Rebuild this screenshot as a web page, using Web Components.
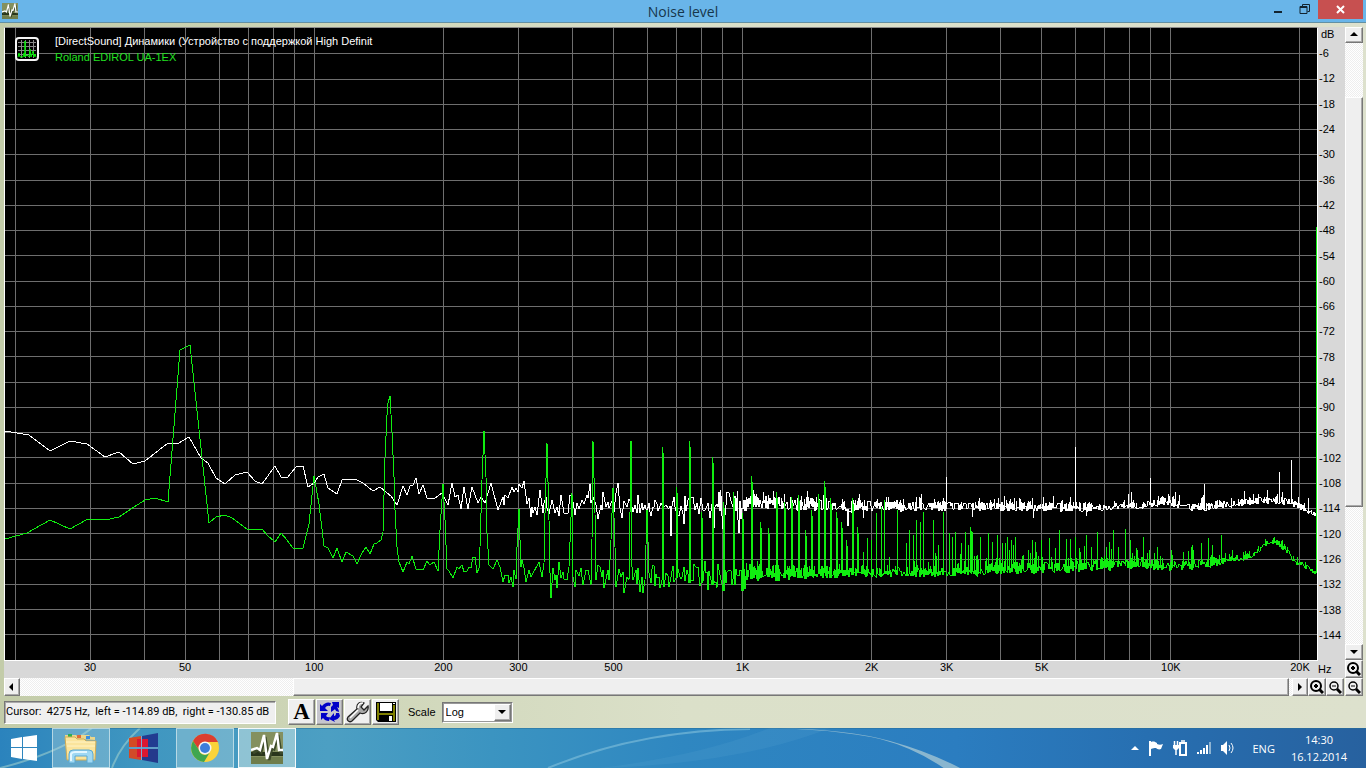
<!DOCTYPE html>
<html lang="en">
<head>
<meta charset="utf-8">
<title>Noise level</title>
<style>
  body {
    margin: 0;
    min-height: 100vh;
    display: flex;
    flex-direction: column;
    font: 11px/13px "Liberation Sans", Arial, sans-serif;
    color: #000;
    overflow: hidden;
  }

  analyzer-window {
    flex: 1;
  }
</style>
</head>
<body>
<analyzer-window></analyzer-window>
<task-bar></task-bar>

<script>
const minFreq = 18.97;
const decadeWidth = 428;
const plotLeft = 5;
const plotTop = 28;
const plotWidth = 1312;
const plotHeight = 632;
const freqTicks = [30, 50, 100, 200, 300, 500, 1000, 2000, 3000, 5000, 10000, 20000];

const freqToOffset = (freq) => decadeWidth * Math.log10(freq / minFreq);
const dbToY = (db) => 53.6 + (-db - 6) * 4.21;

const raisedStyle = `
  border: 1px solid;
  border-color: #fff #777 #777 #fff;
  box-shadow: inset -1px -1px #aaa;
  background: #efefef;
`;

const pulseIcon = `
  <svg viewBox="0 0 32 32" preserveAspectRatio="none">
    <rect width="32" height="32" fill="#84905f"/>
    <path d="M0 20H32V24H0Z" fill="#29351b"/>
    <path d="M0 25H32V32H0Z" fill="#6f7d4b"/>
    <path d="M1 20 6 17 9 19 13 4 17 27 20 15 22 16 26 2 29 20 32 20" fill="none"
      stroke="#3d4a2a" stroke-width="3" transform="translate(1 1)"/>
    <path d="M0 18 6 16 9 18 13 3 16 27 20 14 22 15 26 1 28 18 32 18" fill="none"
      stroke="#fff" stroke-width="2.4"/>
  </svg>`;

// low end of the spectrum, one point per FFT bin
const whiteHead = `5,431 29,435 50,451 70,441 87,444 105,457 119,452 133,464 145,461 168,443
  179,443 189,437 201,458 208,463 216,478 225,484 235,475 247,472 255,481 262,484 275,466
  281,477 287,478 296,467 303,466 308,487 314,483 318,477 324,474 328,488 337,494 342,480
  355,479 363,483 373,491 380,487 387,493 391,496 397,505 403,486 407,495 410,486 413,485
  416,478 419,494 423,485 427,498 435,498 442,493 448,505 452,483 455,497 458,495 461,509
  464,487 468,509 472,487 478,503 481,497 485,503 491,483 498,510 503,497 504,505 505,495
  508,498 512,487 514,492 516,488 518,492 519,484 522,488 524,481 527,504 529,498 531,517
  532,507 533,513 535,507 537,515 540,490 543,513 544,503 546,497 547,508 549,514 552,500
  555,513 557,507 559,516 561,495 564,513 568,513 570,495 572,495 575,515 577,503 579,509
  582,500 584,504 587,495 588,498 590,484 591,503 593,497 596,505 598,519 601,505 602,510
  603,492 606,507 608,502 609,508 612,501 614,512 616,493 618,483 620,508 622,518 624,501
  627,507 629,499 631,502 633,512 635,505 637,513 638,495 640,513 642,503 643,510 645,505
  647,512 649,503`;

const greenHead = `5,539 27,533 50,520 70,529 88,519 105,520 119,517 131,509 145,500 155,498
  168,502 180,350 190,345 209,523 216,517 225,515 232,518 247,529 262,529 267,535 275,542
  281,533 287,540 293,548 303,548 309,524 314,476 319,504 324,546 328,548 333,558 337,548
  342,562 346,552 353,556 357,564 362,553 366,547 370,554 374,544 377,543 381,540 383,532
  385,458 387,415 388,403 390,396 392,432 394,477 395,510 397,547 399,562 403,572 407,562
  409,564 412,556 416,569 423,570 427,561 430,565 434,562 438,571 440,530 443,484 445,520
  447,569 449,571 453,578 457,567 459,569 462,565 464,572 467,571 469,567 471,568 473,557
  475,557 477,573 479,568 480,547 482,480 484,431 486,477 487,533 489,565 493,569 497,560
  500,567 503,582 505,575 508,575 509,583 511,577 513,587 514,570 516,579 517,547 519,509
  520,540 521,567 522,560 524,568 526,582 529,570 531,577 539,562 542,577 544,563 545,513
  547,443 549,520 550,573 551,598 553,568 555,580 556,575 557,588 559,562 561,578 563,572
  564,579 567,580 569,567 572,493 573,577 575,587 576,570 579,576 581,568 583,585 586,570
  588,570 591,585 592,540 593,441 595,513 596,580 598,565 600,567 602,577 603,570 604,588
  608,570 609,580 611,540 613,488 615,547 616,587 619,569 621,577 623,572 624,593 627,577
  629,580 630,513 631,441 632,567 633,580 636,570 637,584 638,568 640,592 642,577 643,593
  645,580 647,510 649,573`;

// base: [x, centre, half height, tail] of the noise band; spikes: [x, y]
const whiteBand = {
  seed: 7,
  denseFrom: 735,
  base: [[650, 505, 16, 4], [740, 506, 17, 4], [750, 502, 7, 6], [800, 504, 7, 6], [870, 506, 6, 8],
    [940, 506, 5, 8], [1000, 506, 5, 8], [1080, 507, 5, 9], [1140, 505, 4, 7], [1165, 501, 4, 5],
    [1190, 507, 5, 10], [1240, 503, 4, 10], [1270, 499, 4, 8], [1290, 502, 4, 6],
    [1305, 508, 4, 5], [1316, 514, 3, 0]],
  spikes: [[670, 530], [683, 518], [713, 522], [720, 490], [722, 523], [737, 491], [738, 527],
    [773, 491], [807, 491], [847, 520], [863, 518], [946, 477], [972, 517], [1033, 518], [1075, 447],
    [1086, 516], [1128, 494], [1131, 492], [1150, 478], [1175, 492], [1204, 484], [1253, 494],
    [1267, 490], [1279, 472], [1291, 460], [1308, 498]],
};

const greenBand = {
  seed: 23,
  denseFrom: 745,
  base: [[650, 575, 17, 6], [700, 577, 18, 6], [740, 577, 17, 6], [760, 573, 9, 6],
    [850, 572, 6, 6], [930, 572, 5, 8], [965, 571, 5, 24], [1000, 568, 7, 24], [1060, 567, 6, 22],
    [1100, 565, 6, 20], [1140, 562, 6, 16], [1165, 566, 6, 12], [1190, 564, 6, 18],
    [1220, 561, 5, 12], [1240, 557, 3, 8], [1252, 556, 3, 7], [1264, 544, 4, 3], [1273, 541, 3, 3],
    [1281, 544, 4, 3], [1292, 557, 4, 4], [1300, 564, 3, 4], [1310, 569, 3, 4], [1316, 573, 2, 0]],
  spikes: [[662, 447], [676, 487], [689, 441], [701, 512], [712, 457], [723, 502], [733, 492],
    [742, 513], [751, 476], [760, 522], [768, 528], [776, 492], [784, 502], [791, 497], [798, 495],
    [805, 530], [811, 510], [818, 494], [824, 481], [830, 498], [836, 512], [841, 522], [846, 540],
    [852, 498], [857, 527], [863, 552], [867, 538], [871, 540], [876, 513], [881, 507], [884, 500],
    [889, 557], [897, 510], [906, 543], [909, 530], [913, 535], [916, 520], [920, 522], [923, 512],
    [933, 520], [935, 553], [936, 556], [938, 545], [943, 512], [949, 533], [952, 537], [955, 532],
    [961, 543], [965, 532], [968, 545], [970, 527], [971, 531], [972, 532], [974, 556], [976, 556],
    [977, 555], [980, 537], [988, 533], [992, 542], [997, 535], [1007, 537], [1009, 550],
    [1011, 540], [1015, 537], [1023, 555], [1032, 540], [1036, 552], [1041, 540], [1049, 538],
    [1055, 548], [1059, 530], [1066, 539], [1070, 539], [1075, 537], [1079, 548], [1084, 546],
    [1086, 535], [1091, 547], [1097, 532], [1106, 547], [1109, 542], [1113, 530], [1118, 547],
    [1125, 529], [1130, 540], [1136, 548], [1143, 537], [1157, 547], [1171, 550], [1183, 552],
    [1193, 550], [1201, 543], [1208, 538], [1212, 545], [1221, 535], [1232, 550]],
};

function noiseBand({ seed, denseFrom, base, spikes }) {
  const spikeAt = new Map(spikes);
  const points = [];
  let state = seed * 7919;
  const random = () => {
    state = (state * 16807) % 2147483647;
    return state / 2147483647;
  };
  let i = 0;
  let clump = false;
  for (let x = base[0][0]; x <= base[base.length - 1][0]; x++) {
    while (i < base.length - 2 && base[i + 1][0] <= x) i++;
    const t = (x - base[i][0]) / (base[i + 1][0] - base[i][0]);
    const [centre, half, tail] = [1, 2, 3].map((n) => base[i][n] + (base[i + 1][n] - base[i][n]) * t);
    const low = Math.round(centre + half * random());
    const high = Math.round(centre - half * random() - tail * Math.pow(random(), 4));
    if (random() < (clump ? 0.22 : 0.32)) clump = !clump;
    if (spikeAt.has(x)) {
      // the bins get narrower than a pixel to the right, and so do the spikes
      const next = x < 860 && !spikeAt.has(x + 1) ? x + 1 : x;
      points.push([x, low], [x, spikeAt.get(x)]);
      if (next > x) {
        points.push([next, spikeAt.get(x) + 6]);
      }
      points.push([next, low]);
      x = next;
    } else if (x < denseFrom) {
      points.push([x, Math.round(centre + half * (random() + random() - 1))]);
      if (random() < 0.5 && !spikeAt.has(x + 1)) x++;
    } else if (clump) {
      points.push([x, low], [x, high]);
    } else {
      points.push([x, Math.round(centre + 1.8 * half * (random() - 0.5))]);
      if (random() < 0.2 && !spikeAt.has(x + 1)) x++;
    }
  }
  return points.map((p) => p.join(",")).join(" ");
}

function gridPath() {
  let d = "";
  for (let decade = 10; decade <= 10000; decade *= 10) {
    for (let n = 1; n < 10; n++) {
      const x = Math.round(plotLeft + freqToOffset(n * decade)) + 0.5;
      if (x > plotLeft && x < plotLeft + plotWidth) {
        d += `M${x} ${plotTop}V${plotTop + plotHeight}`;
      }
    }
  }
  for (let db = -6; db >= -144; db -= 6) {
    d += `M${plotLeft} ${Math.floor(dbToY(db) + 0.2) + 0.5}H${plotLeft + plotWidth}`;
  }
  return d;
}

class TitleBar extends HTMLElement {
  constructor() {
    super();
    this.attachShadow({ mode: "open" }).innerHTML = `
      <style>
        :host {
          display: grid;
          grid-template-columns: 1fr auto 1fr;
          height: 22px;
          background: #69b5e9;
          border-bottom: 1px solid #6390a3;
        }
        .icon {
          width: 16px;
          height: 16px;
          margin: 3px 0 0 2px;
        }
        .icon svg {
          display: block;
          width: 100%;
          height: 100%;
        }
        h1 {
          margin: 0;
          font: 14px/23px "Open Sans", sans-serif;
          color: #17364b;
        }
        .buttons {
          display: flex;
          justify-content: flex-end;
          padding-right: 3px;
        }
        button {
          width: 26px;
          height: 19px;
          padding: 0;
          border: 0;
          background: none;
        }
        .close {
          width: 45px;
          background: #c75050;
        }
        button svg {
          display: block;
          margin: 0 auto;
        }
      </style>
      <div class="icon">${pulseIcon}</div>
      <h1><slot></slot></h1>
      <div class="buttons">
        <button aria-label="Minimize"><svg width="12" height="19"><path d="M1 11H9V13H1Z" fill="#122430"/></svg></button>
        <button aria-label="Restore"><svg width="12" height="19" fill="none" stroke="#122430"><path d="M3.500 6.500V4.500H10.500V11.500H8.500"/><path d="M1 6.500H8V13.500H1Z"/><path d="M1 7.500H8"/></svg></button>
        <button class="close" aria-label="Close"><svg width="10" height="19"><path d="M1 6 8 13M8 6 1 13" stroke="#fff" stroke-width="2"/></svg></button>
      </div>`;
  }
}

class SpectrumChart extends HTMLElement {
  constructor() {
    super();
    this.attachShadow({ mode: "open" }).innerHTML = `
      <style>
        :host {
          display: block;
          position: relative;
          min-height: 0;
          background: #000;
          border: 1px solid #fff;
          border-top-color: #8c8c8c;
        }
        .plot {
          display: block;
          width: 100%;
          height: 100%;
        }
        .plot * {
          fill: none;
          vector-effect: non-scaling-stroke;
          shape-rendering: crispEdges;
        }
        .legend {
          position: absolute;
          top: 5px;
          left: 10px;
          display: flex;
          align-items: center;
          gap: 16px;
          font-size: 11px;
          line-height: 16px;
          color: #fff;
        }
        .right {
          color: #22e022;
        }
        p {
          margin: 0;
        }
      </style>
      <svg class="plot" viewBox="${plotLeft} ${plotTop} ${plotWidth} ${plotHeight}" preserveAspectRatio="none">
        <path d="${gridPath()}" stroke="#6e6e6e"/>
        <polyline points="${whiteHead} ${noiseBand(whiteBand)}" stroke="#fff"/>
        <polyline points="${greenHead} ${noiseBand(greenBand)} 1316,573 1316,227" stroke="#10ee10"/>
      </svg>
      <div class="legend">
        <svg width="24" height="24" fill="none">
          <rect x="1" y="1" width="22" height="22" rx="3" fill="#000" stroke="#f4f4f4" stroke-width="2"/>
          <path d="M6.500 3V21M10.500 3V21M14.500 3V21M18.500 3V21M3 5.500H21M3 9.500H21M3 13.500H21M3 17.500H21" stroke="#888"/>
          <path d="M3 20 4 16 5 20H8L9 16 10 20V4 20L12 18 14 20 15 12 16 20 18 14 19 20 20 17 21 20" stroke="#0e0"/>
        </svg>
        <div>
          <p>[DirectSound] Динамики (Устройство с поддержкой High Definit</p>
          <p class="right">Roland EDIROL UA-1EX</p>
        </div>
      </div>`;
  }
}

class LevelAxis extends HTMLElement {
  constructor() {
    super();
    let labels = "";
    for (let db = -6; db >= -144; db -= 6) {
      labels += `<span>${db}</span>`;
    }
    this.attachShadow({ mode: "open" }).innerHTML = `
      <style>
        :host {
          display: flex;
          flex-direction: column;
          padding: 1px 0 13px 1px;
          background: #d8d8d8;
          white-space: nowrap;
          min-height: 0;
        }
        .unit {
          flex: none;
          height: 13px;
          padding-left: 2px;
        }
        span {
          flex: 1;
          display: flex;
          align-items: center;
        }
      </style>
      <div class="unit">dB</div>${labels}`;
  }
}

class FrequencyAxis extends HTMLElement {
  constructor() {
    super();
    const offsets = freqTicks.map((freq) => Math.round(freqToOffset(freq)));
    const columns = offsets.map((x, i) => `${x - (offsets[i - 1] || 0)}fr`);
    columns.push(`${plotWidth - offsets[offsets.length - 1]}fr`);
    this.attachShadow({ mode: "open" }).innerHTML = `
      <style>
        :host {
          display: flex;
          background: #d8d8d8;
        }
        .ticks {
          flex: 1;
          display: grid;
          grid-template-columns: ${columns.join(" ")};
          padding-left: 1px;
        }
        .ticks span {
          justify-self: end;
          transform: translateX(50%);
        }
        .unit {
          width: 27px;
          padding-top: 2px;
        }
      </style>
      <div class="ticks">
        ${freqTicks.map((f) => `<span>${f < 1000 ? f : f / 1000 + "K"}</span>`).join("")}
      </div>
      <div class="unit">Hz</div>`;
  }
}

class ScrollStrip extends HTMLElement {
  constructor() {
    super();
    const vertical = this.hasAttribute("vertical");
    const [before, thumb, after] = this.getAttribute("parts").split(" ");
    const arrows = vertical ? ["M4 9 8 5 12 9Z", "M4 6 8 10 12 6Z"] : ["M9 4 5 8 9 12Z", "M6 4 10 8 6 12Z"];
    const arrow = (d, label) => `
      <button aria-label="${label}"><svg width="14" height="14" viewBox="1 1 14 14"><path d="${d}"/></svg></button>`;
    this.attachShadow({ mode: "open" }).innerHTML = `
      <style>
        :host {
          display: flex;
          flex-direction: ${vertical ? "column" : "row"};
          min-width: 0;
          min-height: 0;
          background: repeating-conic-gradient(#fff 0 25%, #eee 0 50%) 0 0 / 2px 2px;
        }
        button {
          flex: none;
          display: grid;
          place-items: center;
          width: ${vertical ? "auto" : "16px"};
          height: ${vertical ? "16px" : "auto"};
          padding: 0;
          ${raisedStyle}
        }
        .thumb {
          flex: ${thumb};
          ${raisedStyle}
        }
        .before {
          flex: ${before};
        }
        .after {
          flex: ${after};
        }
      </style>
      ${arrow(arrows[0], vertical ? "Scroll up" : "Scroll left")}
      <div class="before"></div>
      <div class="thumb"></div>
      <div class="after"></div>
      ${arrow(arrows[1], vertical ? "Scroll down" : "Scroll right")}`;
  }
}

class ZoomButton extends HTMLElement {
  constructor() {
    super();
    const zoomIn = this.getAttribute("type") == "in";
    this.attachShadow({ mode: "open" }).innerHTML = `
      <style>
        :host {
          display: block;
          flex: none;
          width: 18px;
          height: 18px;
        }
        button {
          display: grid;
          place-items: center;
          width: 100%;
          height: 100%;
          padding: 0;
          ${raisedStyle}
        }
      </style>
      <button aria-label="Zoom ${zoomIn ? "in" : "out"}">
        <svg width="14" height="14" fill="none" stroke="#000">
          <circle cx="6" cy="6" r="${zoomIn ? 5 : 4}" stroke-width="${zoomIn ? 2 : 1.5}"/>
          <path d="M9 9 13 13" stroke-width="3"/>
          <path d="M4 6H8${zoomIn ? "M6 4V8" : ""}" stroke-width="${zoomIn ? 2 : 1}"/>
        </svg>
      </button>`;
  }
}

class ToolButton extends HTMLElement {
  constructor() {
    super();
    this.attachShadow({ mode: "open" }).innerHTML = `
      <style>
        :host {
          display: block;
          width: 27px;
          height: 26px;
        }
        button {
          display: grid;
          place-items: center;
          width: 100%;
          height: 100%;
          padding: 0;
          border: 1px solid;
          border-color: #fff #777 #777 #fff;
          box-shadow: inset -1px -1px #aaa;
          background: ${this.getAttribute("face") || "#efefef"};
          font: bold 23px/24px "Liberation Serif", serif;
          color: #000;
        }
      </style>
      <button aria-label="${this.getAttribute("label")}"><slot></slot></button>`;
  }
}

class StatusBar extends HTMLElement {
  constructor() {
    super();
    this.attachShadow({ mode: "open" }).innerHTML = `
      <style>
        :host {
          display: flex;
          align-items: center;
          height: 32px;
        }
        input {
          box-sizing: border-box;
          width: 272px;
          height: 23px;
          padding: 0 1px 2px;
          border: 1px solid;
          border-color: #777 #fff #fff #777;
          box-shadow: inset 1px 1px #aaa;
          background: #efefef;
          font: 11px/13px Roboto, Arial, sans-serif;
          color: #000;
        }
        .tools {
          display: flex;
          gap: 1px;
          margin: 0 9px 0 12px;
        }
        label {
          margin-right: 6px;
        }
        .combo {
          box-sizing: border-box;
          display: grid;
          grid-template-columns: 1fr 17px;
          width: 71px;
          height: 21px;
          border: 1px solid;
          border-color: #777 #fff #fff #777;
          box-shadow: inset 1px 1px #999, inset -1px -1px #999;
          background: #fff;
          padding: 1px;
        }
        select {
          grid-area: 1 / 1 / 2 / 3;
          appearance: none;
          border: 0;
          padding: 0 2px;
          background: none;
          font: 11px/13px "Liberation Sans", Arial, sans-serif;
          color: #000;
        }
        .arrow {
          grid-area: 1 / 2;
          display: grid;
          place-items: center;
          pointer-events: none;
          ${raisedStyle}
        }
      </style>
      <input aria-label="Cursor" readonly value="Cursor:  4275 Hz,  left = -114.89 dB,  right = -130.85 dB">
      <div class="tools">
        <tool-button label="Text">A</tool-button>
        <tool-button label="Swap channels" face="#c6c6ce">
          <svg width="22" height="22" fill="#0000c8">
            <path d="M1 3 3 5Q7 0 12 2L11 5Q8 4 6 7L9 10H1Z"/>
            <path d="M13 1H20V7L18 6Q20 9 20 11L17 10Q16 7 15 9L12 11V6L14 4Z"/>
            <path d="M2 12H9L7 15Q9 17 11 16L10 20Q6 20 4 17L2 19Z"/>
            <path d="M20 12 21 15Q19 19 15 19L16 21 10 18 15 12V15Q17 15 17 12Z"/>
          </svg>
        </tool-button>
        <tool-button label="Settings">
          <svg width="24" height="22">
            <path d="M22 5 18 9 15 6 18 2C14 0 10 3 11 8L2 16C0 19 3 22 6 20L14 12C19 14 23 10 22 5Z" fill="#a8a8a8" stroke="#222" stroke-width="1.300"/>
            <path d="M12 9 4 17M17 2C14 2 12 4 12 7" stroke="#fff" stroke-width="1.500" fill="none"/>
          </svg>
        </tool-button>
        <tool-button label="Save">
          <svg width="22" height="22">
            <path d="M1 1H21V21H3L1 19Z" fill="#000"/>
            <path d="M2 2H4V12H2ZM18 4H20V20H18ZM3 12H20V14H3Z" fill="#808000"/>
            <path d="M2 12H4V19H2Z" fill="#808000"/>
            <path d="M5 2H17V10H5ZM18 2H20V3H18ZM14 15H17V20H14Z" fill="#fff"/>
          </svg>
        </tool-button>
      </div>
      <label for="scale">Scale</label>
      <div class="combo">
        <select id="scale"><option>Log</option><option>Linear</option></select>
        <div class="arrow"><svg width="8" height="5"><path d="M0 0H8L4 4Z"/></svg></div>
      </div>`;
  }
}

class AnalyzerWindow extends HTMLElement {
  constructor() {
    super();
    this.attachShadow({ mode: "open" }).innerHTML = `
      <style>
        :host {
          display: flex;
          flex-direction: column;
          background: linear-gradient(90deg, #c3cca9, #ccd4b5 20%, #dbe0c9 50%, #dde1cd);
        }
        .client {
          flex: 1;
          display: grid;
          grid-template-columns: 1fr 27px 18px;
          grid-template-rows: 1fr 17px 18px;
          padding: 4px 3px 0 4px;
        }
        frequency-axis {
          grid-area: 2 / 1 / 3 / 3;
        }
        .side {
          grid-area: 1 / 3 / 3 / 4;
          display: flex;
          flex-direction: column;
        }
        .side scroll-strip,
        .bottom scroll-strip {
          flex: 1;
        }
        .bottom {
          grid-area: 3 / 1 / 4 / 3;
          display: flex;
          padding-right: 1px;
        }
        status-bar {
          padding: 0 4px;
        }
      </style>
      <title-bar>Noise level</title-bar>
      <div class="client">
        <spectrum-chart></spectrum-chart>
        <level-axis></level-axis>
        <frequency-axis></frequency-axis>
        <div class="side">
          <scroll-strip vertical parts="54 409 137"></scroll-strip>
          <zoom-button type="in"></zoom-button>
        </div>
        <div class="bottom">
          <scroll-strip parts="273 994 3"></scroll-strip>
          <zoom-button type="in"></zoom-button>
          <zoom-button type="out"></zoom-button>
        </div>
        <zoom-button type="out"></zoom-button>
      </div>
      <status-bar></status-bar>`;
  }
}

class TaskButton extends HTMLElement {
  constructor() {
    super();
    this.attachShadow({ mode: "open" }).innerHTML = `
      <style>
        :host {
          display: block;
          width: 58px;
        }
        button {
          display: grid;
          place-items: center;
          box-sizing: border-box;
          width: 100%;
          height: 100%;
          padding: 0;
          border: 1px solid transparent;
          background: none;
        }
        :host([open]) button {
          background: rgba(190, 220, 225, 0.35);
          border-color: rgba(215, 235, 240, 0.7);
        }
        :host([active]) button {
          background: rgba(215, 235, 230, 0.5);
          border-color: #f2f8fa;
        }
      </style>
      <button aria-label="${this.getAttribute("label")}"><slot></slot></button>`;
  }
}

class SystemTray extends HTMLElement {
  constructor() {
    super();
    this.attachShadow({ mode: "open" }).innerHTML = `
      <style>
        :host {
          display: flex;
          align-items: center;
          font: 11px/17px "Open Sans", sans-serif;
          color: #fff;
        }
        .icons {
          display: flex;
          align-items: center;
          gap: 8px;
          margin-right: 16px;
        }
        .lang {
          margin-right: 16px;
        }
        time {
          text-align: center;
        }
      </style>
      <div class="icons">
        <svg width="10" height="6"><path d="M1 5 5 1 9 5Z" fill="#fff"/></svg>
        <svg width="16" height="16" fill="#fff"><path d="M1 1H3V16H1Z"/><path d="M3 2C6 1 7 2 9 3V4C11 5 13 5 15 4L13 9C11 10 9 9 8 8 6 8 5 8 3 9Z"/></svg>
        <svg width="16" height="16" fill="none" stroke="#fff"><rect x="8" y="3" width="6" height="12" stroke-width="2"/><path d="M9 1H13M2.500 1V5M5.500 1V5M4 10V15" stroke-width="1.500"/><path d="M1 5H7V8L5 10H3L1 8Z" fill="#fff" stroke="none"/></svg>
        <svg width="16" height="14" fill="#fff"><path d="M1 11H3V13H1ZM4 9H6V13H4ZM7 7H9V13H7ZM10 4H12V13H10Z"/><path d="M13 1H15V13H13Z" fill="#8eb4d2"/></svg>
        <svg width="16" height="16" fill="none" stroke="#fff"><path d="M1 5H3L7 1V15L3 11H1Z" fill="#fff" stroke="none"/><path d="M9 5Q11 8 9 11M11 3Q15 8 11 13"/></svg>
      </div>
      <span class="lang">ENG</span>
      <time datetime="2014-12-16T14:30">14:30<br>16.12.2014</time>`;
  }
}

class TaskBar extends HTMLElement {
  constructor() {
    super();
    this.attachShadow({ mode: "open" }).innerHTML = `
      <style>
        :host {
          position: relative;
          display: flex;
          height: 40px;
          overflow: hidden;
          background: linear-gradient(90deg, #2b83bd, #3f96c0 10%, #4c9fc3 24%, #3b94c1 36%, #2f87c1 50%, #2b7dc0 70%, #276fb1 84%, #27619f);
        }
        .wallpaper {
          position: absolute;
          inset: 0;
          width: 100%;
          height: 100%;
        }
        .buttons {
          position: relative;
          flex: 1;
          display: flex;
          gap: 4px;
        }
        .start {
          width: 48px;
        }
        system-tray {
          position: relative;
          padding-right: 19px;
        }
        .pulse svg {
          display: block;
          width: 32px;
          height: 32px;
        }
      </style>
      <svg class="wallpaper" viewBox="0 0 1366 40" preserveAspectRatio="none" fill="none">
        <path d="M0 40Q60 25 92 0M112 40Q120 18 140 0" stroke="#b2dccf" stroke-width="2" opacity=".5"/>
        <path d="M548 40Q640 2 750 1" stroke="#83c2dc" stroke-width="2" opacity=".6"/>
        <path d="M600 40Q740 36 830 0H770Q700 28 600 40Z" fill="#64b0d8" opacity=".15"/>
        <path d="M750 0Q840 -1 890 13 930 24 962 41L945 41Q915 20 880 11 830 0 750 0Z" fill="#a9c9d4" opacity=".75"/>
        <path d="M0 0H1366" stroke="#286e98"/>
      </svg>
      <div class="buttons">
        <task-button class="start" label="Start">
          <svg width="28" height="28" fill="#fff"><path d="M1 5 12 3V13H1ZM13 3 27 1V13H13ZM1 14H12V25L1 23ZM13 14H27V27L13 25Z"/></svg>
        </task-button>
        <task-button open label="File Explorer">
          <svg width="34" height="32">
            <path d="M1 6V3H12L14 5H17V3H25L27 5H31V8Z" fill="#ecd68a"/>
            <path d="M4 2H8V5H4Z" fill="#2eae52"/><path d="M13 3H17V6H13Z" fill="#df6a3a"/><path d="M22 4H26V7H22Z" fill="#3b8ede"/>
            <path d="M1 5H11L13 7H20L22 9H32L31 28H3Z" fill="#fae49c" stroke="#d0ac55"/>
            <path d="M2 10H31M3 14H31" stroke="#fff3c5"/>
            <path d="M5 31V22Q5 18 9 18H25Q29 18 29 22V31H23V24H11V31Z" fill="#9fd8f3" stroke="#5ba8d1"/>
            <path d="M7 29V22Q8 20 11 20H23" fill="none" stroke="#e3f7ff" stroke-width="2"/>
          </svg>
        </task-button>
        <task-button label="Programs">
          <svg width="32" height="32">
            <path d="M2 6 14 4V15H2Z" fill="#d44a23"/><path d="M2 17H14V28L2 26Z" fill="#d14a28"/>
            <path d="M15 4 31 1V15H15Z" fill="#223c91"/><path d="M15 17H31V31L15 28Z" fill="#24398c"/>
            <path d="M10 7H21V15H10ZM10 17H21V25H10Z" fill="#db1731"/>
            <path d="M2 16H31M14.500 4V28" stroke="#7fa6cf"/>
          </svg>
        </task-button>
        <task-button open label="Chrome">
          <svg width="30" height="30">
            <circle cx="15" cy="15" r="14" fill="#f9d33a"/>
            <path d="M3 8A14 14 0 0 1 28 9H15A6 6 0 0 0 9 17Z" fill="#dc3e30"/>
            <path d="M3 8A14 14 0 0 0 14 29L20 19A6 6 0 0 1 9 17Z" fill="#3fa650"/>
            <circle cx="15" cy="15" r="6.500" fill="#f4f6f6"/>
            <circle cx="15" cy="15" r="5" fill="#3d7ddb"/>
          </svg>
        </task-button>
        <task-button open active label="Noise level"><span class="pulse">${pulseIcon}</span></task-button>
      </div>
      <system-tray></system-tray>`;
  }
}

window.customElements.define("title-bar", TitleBar);
window.customElements.define("spectrum-chart", SpectrumChart);
window.customElements.define("level-axis", LevelAxis);
window.customElements.define("frequency-axis", FrequencyAxis);
window.customElements.define("scroll-strip", ScrollStrip);
window.customElements.define("zoom-button", ZoomButton);
window.customElements.define("tool-button", ToolButton);
window.customElements.define("status-bar", StatusBar);
window.customElements.define("analyzer-window", AnalyzerWindow);
window.customElements.define("task-button", TaskButton);
window.customElements.define("system-tray", SystemTray);
window.customElements.define("task-bar", TaskBar);
</script>
</body>
</html>
